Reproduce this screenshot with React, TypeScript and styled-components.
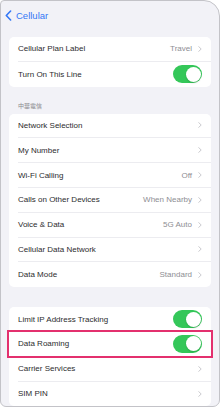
import styled, { createGlobalStyle } from 'styled-components';

const GlobalStyle = createGlobalStyle`
  html, body {
    margin: 0;
    padding: 0;
    background: #ffffff;
  }
  body {
    font-family: "Liberation Sans", Arial, sans-serif;
    -webkit-font-smoothing: antialiased;
  }
`;

const Frame = styled.div`
  width: 220px;
  height: 407px;
  box-sizing: border-box;
  border: 1px solid #c3c3c8;
  border-radius: 4px 16px 7px 6px;
  background: #f2f2f7;
  overflow: hidden;
  display: flex;
  flex-direction: column;
`;

const NavBar = styled.div`
  height: 28px;
  display: flex;
  align-items: center;
  gap: 4px;
  padding-left: 4px;
  color: #3478f6;
  font-size: 9.5px;
  flex-shrink: 0;
`;

const Content = styled.div`
  padding: 8px 8px 0;
  display: flex;
  flex-direction: column;
`;

const Group = styled.div<{ $gap?: number }>`
  background: #ffffff;
  border-radius: 5px;
  margin-bottom: ${(p) => p.$gap ?? 0}px;
`;

const SectionHeader = styled.div`
  height: 27px;
  box-sizing: border-box;
  padding: 16px 0 0 9px;
  font-family: "Noto Sans CJK TC", "Noto Sans CJK SC", sans-serif;
  font-size: 6px;
  color: #8a8a8e;
  line-height: 6px;
`;

const Row = styled.div<{ $last?: boolean }>`
  position: relative;
  height: 24.8px;
  display: flex;
  align-items: center;
  margin-left: 9px;
  padding-right: 9px;
  box-sizing: border-box;
  border-bottom: ${(p) => (p.$last ? 'none' : '1px solid #ececf0')};
  font-size: 8px;
  color: #2c2c2e;
`;

const Label = styled.span`
  flex: 1;
`;

const Value = styled.span`
  color: #8e8e93;
  margin-right: 6px;
`;

const Toggle = styled.div<{ $on?: boolean }>`
  width: 29px;
  height: 18px;
  border-radius: 9px;
  background: ${(p) => (p.$on ? '#34c759' : '#e9e9ea')};
  position: relative;
  flex-shrink: 0;
  &::after {
    content: '';
    position: absolute;
    top: 1.5px;
    ${(p) => (p.$on ? 'right: 1.5px;' : 'left: 1.5px;')}
    width: 15px;
    height: 15px;
    border-radius: 50%;
    background: #ffffff;
    box-shadow: 0 1px 2px rgba(0, 0, 0, 0.15);
  }
`;

const Highlight = styled.div`
  position: absolute;
  left: -11px;
  right: -2px;
  top: -2px;
  bottom: -2px;
  border: 2px solid #e3306e;
  pointer-events: none;
`;

const BackChevron = () => (
  <svg width="7" height="11" viewBox="0 0 7 11" fill="none">
    <path d="M5.6 1 L1.3 5.5 L5.6 10" stroke="#3478f6" strokeWidth="1.6" strokeLinecap="round" strokeLinejoin="round" />
  </svg>
);

const Chevron = () => (
  <svg width="4" height="6" viewBox="0 0 4 6" fill="none" style={{ flexShrink: 0 }}>
    <path d="M0.7 0.6 L3.2 3 L0.7 5.4" stroke="#c4c4c8" strokeWidth="0.9" strokeLinecap="round" strokeLinejoin="round" />
  </svg>
);

type Item = {
  label: string;
  value?: string;
  toggle?: boolean;
  highlight?: boolean;
};

const groupOne: Item[] = [
  { label: 'Cellular Plan Label', value: 'Travel' },
  { label: 'Turn On This Line', toggle: true },
];

const groupTwo: Item[] = [
  { label: 'Network Selection' },
  { label: 'My Number' },
  { label: 'Wi-Fi Calling', value: 'Off' },
  { label: 'Calls on Other Devices', value: 'When Nearby' },
  { label: 'Voice & Data', value: '5G Auto' },
  { label: 'Cellular Data Network' },
  { label: 'Data Mode', value: 'Standard' },
];

const groupThree: Item[] = [
  { label: 'Limit IP Address Tracking', toggle: true },
  { label: 'Data Roaming', toggle: true, highlight: true },
  { label: 'Carrier Services' },
  { label: 'SIM PIN' },
];

const Rows = ({ items }: { items: Item[] }) => (
  <>
    {items.map((item, i) => (
      <Row key={item.label} $last={i === items.length - 1}>
        <Label>{item.label}</Label>
        {item.toggle ? (
          <Toggle $on />
        ) : (
          <>
            {item.value && <Value>{item.value}</Value>}
            <Chevron />
          </>
        )}
        {item.highlight && <Highlight />}
      </Row>
    ))}
  </>
);

export default function App() {
  return (
    <>
      <GlobalStyle />
      <Frame>
        <NavBar>
          <BackChevron />
          <span>Cellular</span>
        </NavBar>
        <Content>
          <Group>
            <Rows items={groupOne} />
          </Group>
          <SectionHeader>中華電信</SectionHeader>
          <Group $gap={20}>
            <Rows items={groupTwo} />
          </Group>
          <Group>
            <Rows items={groupThree} />
          </Group>
        </Content>
      </Frame>
    </>
  );
}
